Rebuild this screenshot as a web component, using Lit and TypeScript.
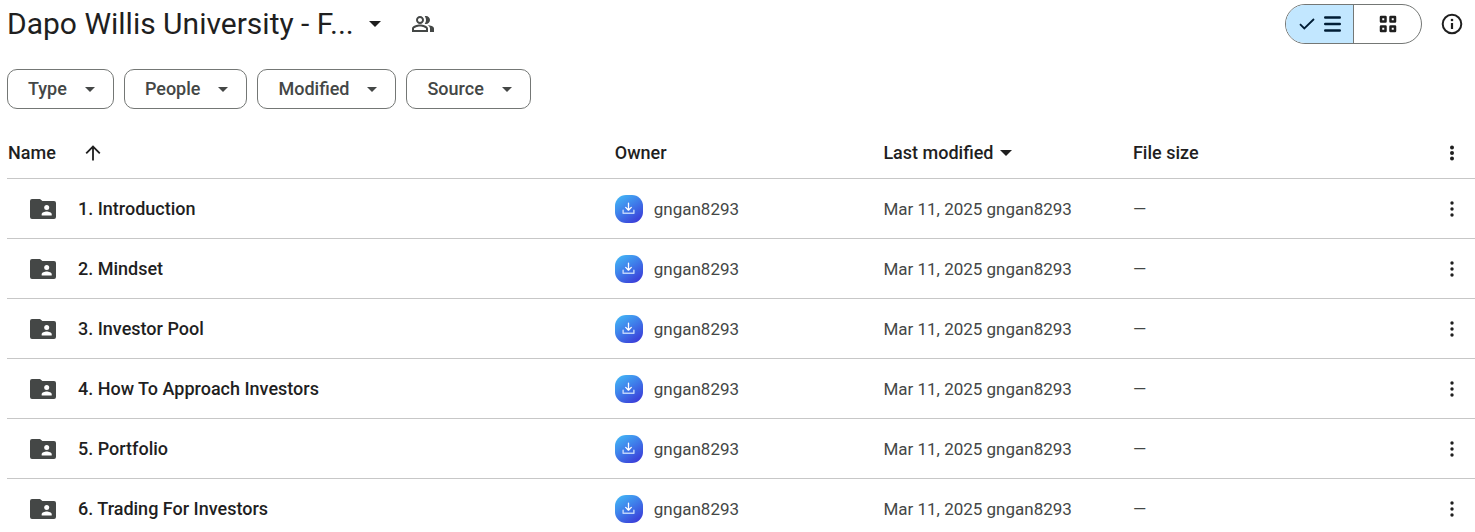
import { LitElement, html, css, svg } from "lit";
import { customElement, property, state } from "lit/decorators.js";
import { classMap } from "lit/directives/class-map.js";

interface DriveFolder {
  name: string;
  owner: string;
  modified: string;
}

const OWNER = "gngan8293";
const FOLDERS: DriveFolder[] = [
  "1. Introduction",
  "2. Mindset",
  "3. Investor Pool",
  "4. How To Approach Investors",
  "5. Portfolio",
  "6. Trading For Investors",
].map((name) => ({ name, owner: OWNER, modified: "Mar 11, 2025" }));

const FILTERS = ["Type", "People", "Modified", "Source"];

const caret = (width: number, height: number) => html`
  <svg width=${width} height=${height} viewBox="0 0 12 6" preserveAspectRatio="none" aria-hidden="true">
    <path d="M0 0h12L6 6z" fill="currentColor" />
  </svg>
`;

const dots = (gap: number, radius: number) => html`
  <svg width="24" height="24" viewBox="0 0 24 24" aria-hidden="true">
    ${[-gap, 0, gap].map((dy) => svg`<circle cx="12" cy=${12 + dy} r=${radius} fill="currentColor" />`)}
  </svg>
`;

const folderIcon = html`
  <svg width="26" height="20" viewBox="0 0 26 20" aria-hidden="true">
    <path d="M2 0h8l2.4 2H24a2 2 0 0 1 2 2v14a2 2 0 0 1-2 2H2a2 2 0 0 1-2-2V2a2 2 0 0 1 2-2z" fill="#444746" />
    <circle cx="16.7" cy="8.6" r="2.5" fill="#fff" />
    <path d="M11.7 16.5v-1.2c0-1.7 3-2.7 5-2.7s5 1 5 2.7v1.2z" fill="#fff" />
  </svg>
`;

@customElement("owner-avatar")
class OwnerAvatar extends LitElement {
  static styles = css`
    :host {
      display: block;
      width: 28px;
      height: 28px;
      flex: none;
    }
    .mark {
      display: grid;
      place-items: center;
      height: 100%;
      border-radius: 11px;
      background: linear-gradient(145deg, #42b4f5 8%, #3f7fea 45%, #3a35d6 95%);
    }
  `;

  render() {
    return html`
      <div class="mark">
        <svg width="13" height="13" viewBox="0 0 14 14" fill="none" stroke-linecap="round" stroke-linejoin="round" aria-hidden="true">
          <path d="M7 1.2v7.3M4 5.8l3 3 3-3" stroke="#fff" stroke-width="1.4" />
          <path d="M1.2 9v3.2h11.6V9" stroke="#bcd3fb" stroke-width="1.6" />
        </svg>
      </div>
    `;
  }
}

@customElement("filter-chip")
class FilterChip extends LitElement {
  @property() label = "";

  static styles = css`
    .chip {
      display: flex;
      align-items: center;
      gap: 18px;
      height: 40px;
      padding: 0 18px 0 20px;
      border: 1px solid #747775;
      border-radius: 10px;
      background: #fff;
      color: #444746;
      font: 500 18px/24px Roboto, "Liberation Sans", sans-serif;
      cursor: pointer;
    }
  `;

  render() {
    return html`
      <button class="chip" type="button" aria-haspopup="menu">
        ${this.label} ${caret(10, 5)}
      </button>
    `;
  }
}

@customElement("app-root")
class AppRoot extends LitElement {
  @state() private view: "list" | "grid" = "list";

  static styles = css`
    :host {
      display: block;
      box-sizing: border-box;
      height: 100vh;
      overflow: hidden;
      padding: 4px 0 0 7px;
      background: #fff;
      color: #1f1f1f;
      font: 400 17px/24px Roboto, "Liberation Sans", sans-serif;
    }
    svg {
      display: block;
      flex: none;
    }
    button {
      margin: 0;
      padding: 0;
      border: 0;
      background: none;
      color: inherit;
      font: inherit;
      cursor: pointer;
    }
    .topbar {
      display: flex;
      align-items: center;
      justify-content: space-between;
      height: 40px;
      padding-right: 11px;
    }
    .heading,
    .tools {
      display: flex;
      align-items: center;
    }
    .heading {
      gap: 30px;
    }
    .title {
      margin: 0;
      font-size: 30px;
      line-height: 36px;
      font-weight: 400;
    }
    .crumb {
      display: flex;
      align-items: center;
      gap: 15px;
    }
    .shared {
      color: #444746;
    }
    .tools {
      gap: 18px;
    }
    .switch {
      display: flex;
      box-sizing: border-box;
      width: 137px;
      height: 40px;
      overflow: hidden;
      border: 1px solid #747775;
      border-radius: 20px;
    }
    .option {
      display: flex;
      flex: 1;
      align-items: center;
      justify-content: center;
      gap: 9px;
    }
    .option + .option {
      border-left: 1px solid #747775;
    }
    .selected {
      background: #c2e7ff;
      color: #001d35;
    }
    .filters {
      display: flex;
      gap: 10px;
      margin: 25px 0 19px;
    }
    .files {
      width: 100%;
      table-layout: fixed;
      border-collapse: separate;
      border-spacing: 0;
    }
    .name-col {
      width: 41.4%;
    }
    .owner-col {
      width: 18.3%;
    }
    .modified-col {
      width: 17%;
    }
    .menu-col {
      width: 46px;
    }
    th,
    td {
      box-sizing: border-box;
      padding: 0;
      border-bottom: 1px solid #c7c7c7;
      text-align: left;
      white-space: nowrap;
    }
    th {
      height: 51px;
      font-size: 18px;
      font-weight: 500;
    }
    td {
      height: 60px;
      color: #444746;
    }
    .cell,
    .sort {
      display: flex;
      align-items: center;
    }
    .cell {
      gap: 11px;
    }
    .head-name {
      gap: 29px;
      padding-left: 1px;
    }
    .sort {
      gap: 7px;
    }
    .folder {
      gap: 22px;
      padding-left: 23px;
      color: #1f1f1f;
      font-size: 18px;
      font-weight: 500;
    }
    .more {
      display: block;
      margin: 0 auto;
      color: #1f1f1f;
    }
  `;

  private viewSwitch() {
    const list = this.view === "list";
    const tick = html`
      <svg width="16" height="12" viewBox="0 0 16 12" aria-hidden="true">
        <path d="M1 6.2l4.3 4.3L15 1" fill="none" stroke="currentColor" stroke-width="1.8" />
      </svg>
    `;
    return html`
      <div class="switch" role="group" aria-label="View">
        <button
          class=${classMap({ option: true, selected: list })}
          type="button"
          aria-label="List layout"
          aria-pressed=${list}
          @click=${() => (this.view = "list")}
        >
          ${list ? tick : null}
          <svg width="17" height="16" viewBox="0 0 17 16" aria-hidden="true">
            <path d="M1.2 1.5h14.6M1.2 8h14.6M1.2 14.5h14.6" stroke="currentColor" stroke-width="2.4" stroke-linecap="round" />
          </svg>
        </button>
        <button
          class=${classMap({ option: true, selected: !list })}
          type="button"
          aria-label="Grid layout"
          aria-pressed=${!list}
          @click=${() => (this.view = "grid")}
        >
          ${list ? null : tick}
          <svg width="18" height="18" viewBox="0 0 18 18" fill="none" stroke="currentColor" stroke-width="2.5" stroke-linejoin="round" aria-hidden="true">
            <path d="M2 2h4.500v4.500H2zM11.500 2H16v4.500h-4.500zM2 11.500h4.500V16H2zM11.500 11.500H16V16h-4.500z" />
          </svg>
        </button>
      </div>
    `;
  }

  private row(folder: DriveFolder) {
    return html`
      <tr>
        <td><div class="cell folder">${folderIcon}<span>${folder.name}</span></div></td>
        <td><div class="cell"><owner-avatar></owner-avatar><span>${folder.owner}</span></div></td>
        <td>${folder.modified} ${folder.owner}</td>
        <td>—</td>
        <td><button class="more" type="button" aria-label="More actions">${dots(6, 1.7)}</button></td>
      </tr>
    `;
  }

  render() {
    return html`
      <header class="topbar">
        <div class="heading">
          <h1 class="title">
            <button class="crumb" type="button" aria-haspopup="menu">
              Dapo Willis University - F... ${caret(12, 6)}
            </button>
          </h1>
          <button class="shared" type="button" aria-label="Manage access">
            <svg width="24" height="24" viewBox="0 0 24 24" fill="currentColor" aria-hidden="true">
              <path d="M9 12.500c-2.700 0-8 1.300-8 4V20h16v-3.500c0-2.700-5.300-4-8-4zm6 5.500H3v-1.400c.2-.7 3.300-2.100 6-2.100s5.800 1.400 6 2.100zM9 12c2.200 0 4-1.800 4-4s-1.800-4-4-4-4 1.800-4 4 1.800 4 4 4zm0-6c1.100 0 2 .9 2 2s-.9 2-2 2-2-.9-2-2 .9-2 2-2zM16.700 13.100C18 14 19 15.100 19 16.600V20h4v-3.500c0-2-3.500-3-6.300-3.400zM15 12c2.200 0 4-1.800 4-4s-1.800-4-4-4c-.5 0-.9.1-1.300.2.800 1 1.300 2.400 1.300 3.800s-.5 2.700-1.300 3.700c.4.2.8.3 1.300.3z" />
            </svg>
          </button>
        </div>
        <div class="tools">
          ${this.viewSwitch()}
          <button type="button" aria-label="View details">
            <svg width="24" height="24" viewBox="0 0 24 24" aria-hidden="true">
              <circle cx="12" cy="12" r="9.3" fill="none" stroke="currentColor" stroke-width="2" />
              <path d="M12 11v6" stroke="currentColor" stroke-width="2.2" />
              <circle cx="12" cy="8" r="1.3" fill="currentColor" />
            </svg>
          </button>
        </div>
      </header>

      <nav class="filters" aria-label="Filters">
        ${FILTERS.map((label) => html`<filter-chip label=${label}></filter-chip>`)}
      </nav>

      <table class="files">
        <colgroup>
          <col class="name-col" />
          <col class="owner-col" />
          <col class="modified-col" />
          <col />
          <col class="menu-col" />
        </colgroup>
        <thead>
          <tr>
            <th scope="col">
              <div class="cell head-name">
                <span>Name</span>
                <button type="button" aria-label="Reverse sort direction">
                  <svg width="16" height="16" viewBox="0 0 16 16" fill="none" stroke="currentColor" stroke-width="1.8" aria-hidden="true">
                    <path d="M8 15.500V1.500M1.200 8.300L8 1.500l6.800 6.800" />
                  </svg>
                </button>
              </div>
            </th>
            <th scope="col">Owner</th>
            <th scope="col"><button class="sort" type="button">Last modified ${caret(12, 6)}</button></th>
            <th scope="col">File size</th>
            <th scope="col"><button class="more" type="button" aria-label="More options">${dots(5.5, 2)}</button></th>
          </tr>
        </thead>
        <tbody>
          ${FOLDERS.map((folder) => this.row(folder))}
        </tbody>
      </table>
    `;
  }
}
